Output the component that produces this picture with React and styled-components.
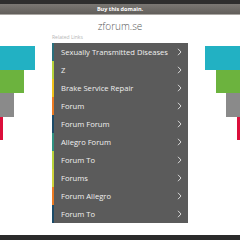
import React from 'react'
import styled, { createGlobalStyle } from 'styled-components'

const Global = createGlobalStyle`
  html, body {
    margin: 0;
    padding: 0;
    background: #fff;
    overflow: hidden;
  }
  body {
    font-family: "Open Sans", "Liberation Sans", sans-serif;
  }
`

const Page = styled.div`
  width: 240px;
  height: 240px;
  display: flex;
  flex-direction: column;
`

const TopStrip = styled.div`
  height: 4px;
  background: #2e2e2e;
`

const BuyBar = styled.div`
  height: 10px;
  background: linear-gradient(#7b7874, #625f5b);
  border-bottom: 1px solid #a9a6a2;
  display: flex;
  align-items: center;
  justify-content: center;
  color: #fff;
  font-size: 5.5px;
  font-weight: 700;
`

const Domain = styled.div`
  height: 16px;
  padding-top: 3px;
  display: flex;
  align-items: center;
  justify-content: center;
  color: #5a5a5a;
  font-size: 10px;
  font-weight: 300;
`

const Main = styled.div`
  flex: 1;
  display: flex;
`

const Side = styled.div`
  width: 52px;
  display: flex;
  flex-direction: column;
  align-items: ${p => (p.right ? 'flex-end' : 'flex-start')};
  padding-top: 12px;
`

const Bar = styled.div`
  height: 23.5px;
  width: ${p => p.w}px;
  background: ${p => p.color};
`

const Center = styled.div`
  width: 136px;
  display: flex;
  flex-direction: column;
`

const Label = styled.div`
  height: 9px;
  line-height: 7px;
  color: #b5b5b5;
  font-size: 5px;
`

const List = styled.div`
  background: #5b5b5b;
  display: flex;
  flex-direction: column;
`

const Row = styled.div`
  height: 18px;
  display: flex;
  align-items: center;
  border-left: 2px solid ${p => p.accent};
  padding: 0 6px 0 7px;
  color: #f0f0f0;
  font-size: 7.6px;
  font-weight: 500;
`

const RowText = styled.span`
  flex: 1;
  white-space: nowrap;
`

const Footer = styled.div`
  height: 5px;
  background: #2b2b2b;
`

const Chevron = () => (
  <svg width="5" height="8" viewBox="0 0 5 8">
    <path d="M1 0.8 L4 4 L1 7.2" fill="none" stroke="#d8d8d8" strokeWidth="1" />
  </svg>
)

const links = [
  ['Sexually Transmitted Diseases', '#2a6f7c'],
  ['Z', '#b6d23a'],
  ['Brake Service Repair', '#f1c21b'],
  ['Forum', '#ec7a22'],
  ['Forum Forum', '#1c4b68'],
  ['Allegro Forum', '#2f9180'],
  ['Forum To', '#b9d33a'],
  ['Forums', '#cfd33a'],
  ['Forum Allegro', '#ec7a22'],
  ['Forum To', '#1c4b68'],
]

const bars = [
  ['#22b1c3', 35],
  ['#6cb33e', 24],
  ['#8a8a8a', 14],
  ['#dc0f3b', 3],
]

const App = () => {
  return (
    <Page>
      <Global />
      <TopStrip />
      <BuyBar>Buy this domain.</BuyBar>
      <Domain>zforum.se</Domain>
      <Main>
        <Side>
          {bars.map(([c, w]) => <Bar key={c} color={c} w={w} />)}
        </Side>
        <Center>
          <Label>Related Links</Label>
          <List>
            {links.map(([t, c], i) => (
              <Row key={i} accent={c}>
                <RowText>{t}</RowText>
                <Chevron />
              </Row>
            ))}
          </List>
        </Center>
        <Side right>
          {bars.map(([c, w]) => <Bar key={c} color={c} w={w} />)}
        </Side>
      </Main>
      <Footer />
    </Page>
  )
}

export default App
